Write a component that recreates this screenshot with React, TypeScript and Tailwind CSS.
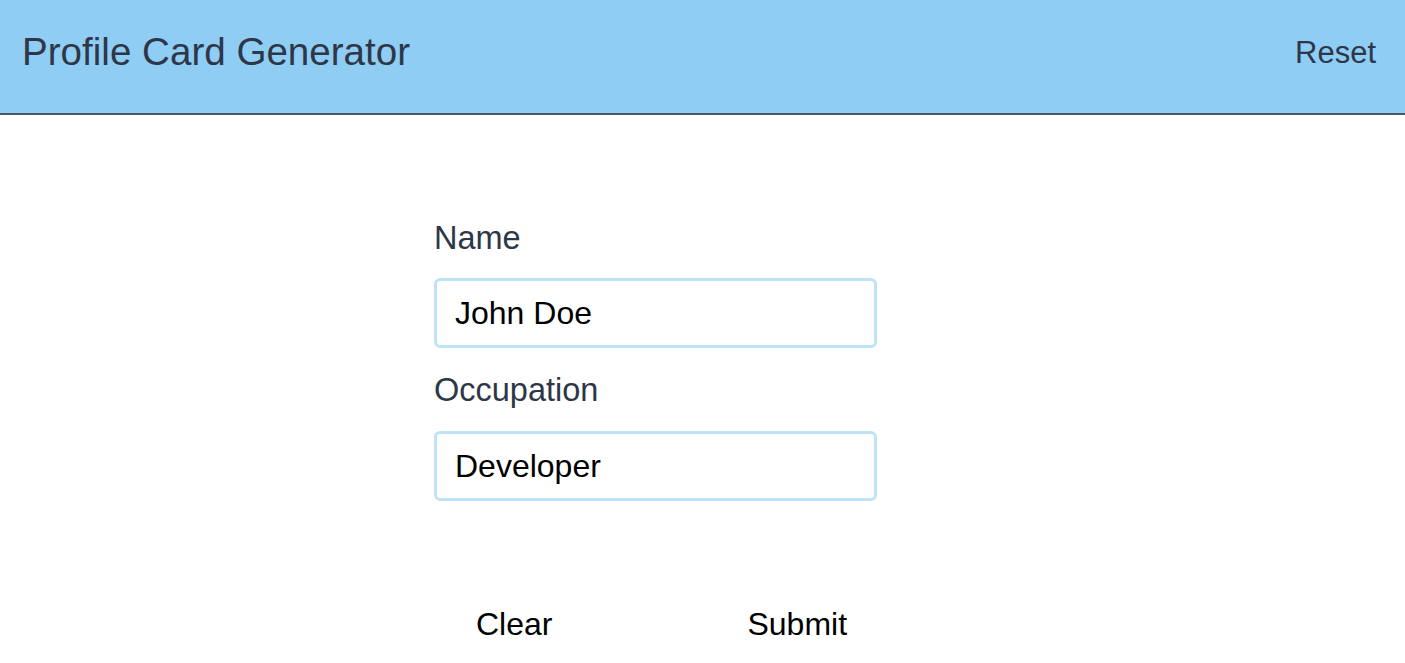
import React, { useState } from 'react'

const font = { fontFamily: '"Liberation Sans", Arial, sans-serif' }

const App: React.FC = () => {
  const [name, setName] = useState('John Doe')
  const [occupation, setOccupation] = useState('Developer')

  const reset = () => {
    setName('John Doe')
    setOccupation('Developer')
  }

  return (
    <div className="min-h-screen bg-white" style={font}>
      <header className="flex h-[115px] items-center justify-between border-b-2 border-[#4a5568] bg-[#8fcdf4] pb-[8px] pl-[22px] pr-[29px]">
        <h1 className="text-[38.6px] leading-none text-[#2d3748]">Profile Card Generator</h1>
        <button className="text-[31px] leading-none text-[#2d3748]" onClick={reset}>
          Reset
        </button>
      </header>

      <main className="pl-[434px] pt-[103px]">
        <div className="flex w-[443px] flex-col">
          <label className="text-[32.5px] leading-[40px] text-[#2d3748]">Name</label>
          <input
            className="mt-[20px] h-[70px] rounded-[6px] border-[3px] border-[#bee3f8] pl-[18px] text-[32px] text-black outline-none"
            value={name}
            onChange={(e) => setName(e.target.value)}
          />

          <label className="mt-[22px] text-[32.5px] leading-[40px] text-[#2d3748]">Occupation</label>
          <input
            className="mt-[21px] h-[70px] rounded-[6px] border-[3px] border-[#bee3f8] pl-[18px] text-[32px] text-black outline-none"
            value={occupation}
            onChange={(e) => setOccupation(e.target.value)}
          />
        </div>

        <div className="mt-[103px] flex">
          <button className="h-[40px] px-[42px] text-[32px] leading-[40px] text-black" onClick={() => { setName(''); setOccupation('') }}>
            Clear
          </button>
          <button className="ml-[111px] h-[40px] px-[42px] text-[32px] leading-[40px] text-black">
            Submit
          </button>
        </div>
      </main>
    </div>
  )
}

export default App
